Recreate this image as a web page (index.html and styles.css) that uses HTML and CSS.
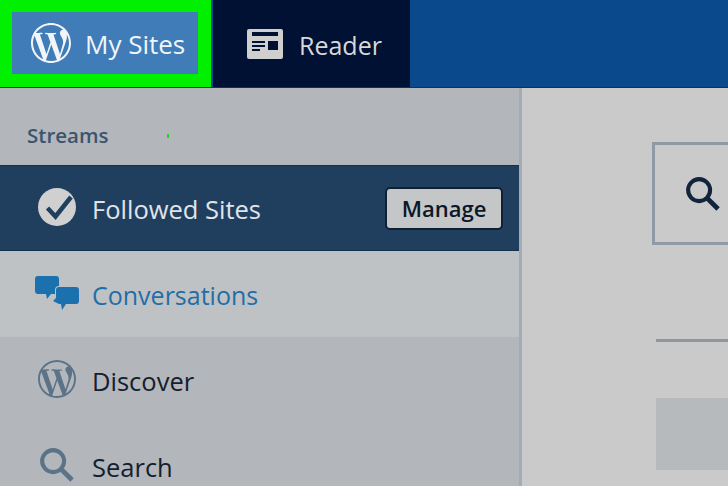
FILE: index.html
```html
<!DOCTYPE html>
<html lang="en">
<head>
<meta charset="utf-8">
<title>Reader</title>
<link rel="stylesheet" href="styles.css">
</head>
<body>
<svg class="defs" width="0" height="0" aria-hidden="true">
  <symbol id="wp" viewBox="0 0 24 24"><path d="M21.469 6.825c.84 1.537 1.318 3.3 1.318 5.175 0 3.979-2.156 7.456-5.363 9.325l3.295-9.527c.615-1.54.82-2.771.82-3.864 0-.405-.026-.78-.07-1.11m-7.981.105c.647-.03 1.232-.105 1.232-.105.582-.075.514-.93-.067-.899 0 0-1.755.135-2.88.135-1.064 0-2.85-.15-2.85-.15-.585-.03-.661.855-.075.885 0 0 .54.061 1.125.09l1.68 4.605-2.37 7.08L5.354 6.9c.649-.03 1.234-.1 1.234-.1.585-.075.516-.93-.065-.896 0 0-1.746.138-2.874.138-.2 0-.438-.008-.69-.015C4.911 3.15 8.235 1.215 12 1.215c2.809 0 5.365 1.072 7.286 2.833-.046-.003-.091-.009-.141-.009-1.06 0-1.812.923-1.812 1.914 0 .89.513 1.643 1.06 2.531.411.72.89 1.643.89 2.977 0 .915-.354 1.994-.821 3.479l-1.075 3.585-3.9-11.61.001.014zM12 22.784c-1.059 0-2.081-.153-3.048-.437l3.237-9.406 3.315 9.087c.024.053.05.101.078.149-1.12.393-2.325.609-3.582.609M1.211 12c0-1.564.336-3.05.935-4.39L7.29 21.709C3.694 19.96 1.212 16.271 1.211 12M12 0C5.385 0 0 5.385 0 12s5.385 12 12 12 12-5.385 12-12S18.615 0 12 0"/></symbol>
  <symbol id="search" viewBox="0 0 35 35"><circle cx="13.500" cy="13.500" r="11.300" fill="none" stroke="currentColor" stroke-width="4.200"/><path d="M22 22l11 11" fill="none" stroke="currentColor" stroke-width="5"/></symbol>
</svg>
<header class="topbar">
  <div class="mysites-frame">
    <a class="mysites">
      <svg class="wp-logo"><use href="#wp"/></svg>
      <span class="nudge">My Sites</span>
    </a>
  </div>
  <a class="reader">
    <svg class="reader-icon" viewBox="0 0 36 30">
      <path class="paper" d="M2 0h32a2 2 0 0 1 2 2v26a2 2 0 0 1-2 2H2a2 2 0 0 1-2-2V2a2 2 0 0 1 2-2z"/>
      <path class="ink" d="M5 3h26v4H5zM5 12h13v2H5zM21 12h10v9H21zM5 16h13v2H5zM5 20h8v2H5z"/>
    </svg>
    <span class="nudge">Reader</span>
  </a>
</header>
<div class="content">
  <nav class="sidebar">
    <div class="streams">Streams<i class="speck"></i></div>
    <a class="row active">
      <span class="slot">
        <svg class="ic38" viewBox="0 0 38 38"><circle cx="19" cy="19" r="19" fill="#d0d0d0"/><path d="M9.500 20l8 8.500L33 9" fill="none" stroke="#203f5e" stroke-width="4.500"/></svg>
      </span>
      <span class="label">Followed Sites</span>
      <button class="manage">Manage</button>
    </a>
    <a class="row conv">
      <span class="slot">
        <svg class="chat" viewBox="0 0 44 34">
          <path d="M3 0h18a3 3 0 0 1 3 3v12a3 3 0 0 1-3 3h-5l-4 5-1-5H3a3 3 0 0 1-3-3V3a3 3 0 0 1 3-3z"/>
          <path class="chat-front" d="M24 11h17a3 3 0 0 1 3 3v11a3 3 0 0 1-3 3H31l-4 6-1-6h-2l-6-3 3-3v-8a3 3 0 0 1 3-3z"/>
        </svg>
      </span>
      <span class="label">Conversations</span>
    </a>
    <a class="row">
      <span class="slot"><svg class="ic38 muted"><use href="#wp"/></svg></span>
      <span class="label">Discover</span>
    </a>
    <a class="row">
      <span class="slot"><svg class="ic34 muted"><use href="#search"/></svg></span>
      <span class="label">Search</span>
    </a>
  </nav>
  <main class="main">
    <div class="searchbox"><svg class="ic34 dark"><use href="#search"/></svg></div>
    <hr class="rule">
    <div class="placeholder"></div>
  </main>
</div>
</body>
</html>
```
FILE: styles.css
```css
* { box-sizing: border-box; }
html, body { margin: 0; height: 486px; overflow: hidden; }
body { font-family: "Open Sans", "Noto Sans", sans-serif; background: #cacaca; }
.defs { position: absolute; }

.topbar { display: flex; height: 88px; background: #0a4a8c; border-bottom: 1px solid #10334f; }
.mysites-frame { width: 211px; padding: 12px 13px 12px 12px; background: #00f000; }
.mysites { display: flex; align-items: center; gap: 14px; height: 62px; padding-left: 19px; background: #3f7cb8; color: #f2f5f8; font-size: 26px; }
.wp-logo { width: 40px; height: 40px; fill: #f2f5f8; }
.reader { display: flex; align-items: center; gap: 16px; width: 197px; margin-left: 2px; padding-left: 34px; background: #001133; color: #d8d8d8; font-size: 25px; }
.reader-icon { width: 36px; height: 30px; }
.nudge { padding-top: 2px; }
.paper { fill: #cfcfcf; }
.ink { fill: #001133; }

.content { display: flex; height: 398px; }
.sidebar { width: 522px; flex: none; background: #b3b6ba; border-right: 3px solid #a4abb5; }
.streams { position: relative; height: 77px; padding: 33px 0 0 27px; color: #3a5570; font-size: 20.5px; font-weight: 600; line-height: 28px; }
.speck { position: absolute; left: 167px; top: 46px; width: 2px; height: 4px; background: #22d022; }
.row { display: flex; align-items: center; height: 86px; color: #14202e; font-size: 25.500px; }
.slot { display: flex; justify-content: center; width: 92px; padding: 0 1px 2px 22px; flex: none; }
.active { background: #203f5e; color: #e0e4e8; border-top: 1px solid #14304f; border-bottom: 1px solid #14304f; }
.conv { background: #bfc2c4; color: #1f6ea8; font-size: 25px; }
.label { flex: 1; padding-top: 2px; }
.active .label { padding-top: 1px; }
.ic38 { width: 38px; height: 38px; }
.ic34 { width: 34px; height: 34px; }
.muted { fill: #5b7388; color: #5b7388; }
.dark { color: #12233b; }
.chat { width: 44px; height: 34px; fill: #1a71ae; }
.chat-front { stroke: #bfc2c4; stroke-width: 2; paint-order: stroke; }
.manage { width: 118px; height: 43px; margin-right: 16px; padding: 0; background: #c4c6c7; border: 2px solid #0e2036; border-radius: 5px; color: #0c1826; font: 600 22px "Open Sans", sans-serif; }

.main { flex: 1; padding: 54px 0 0 130px; min-width: 0; }
.searchbox { display: flex; align-items: center; height: 103px; margin-bottom: 94px; padding-left: 31px; border: 3px solid #8f9aa6; border-right: 0; }
.rule { height: 3px; margin: 0 0 56px 4px; border: 0; background: #8f979e; }
.placeholder { height: 72px; margin-left: 4px; background: #b7babc; }
```
